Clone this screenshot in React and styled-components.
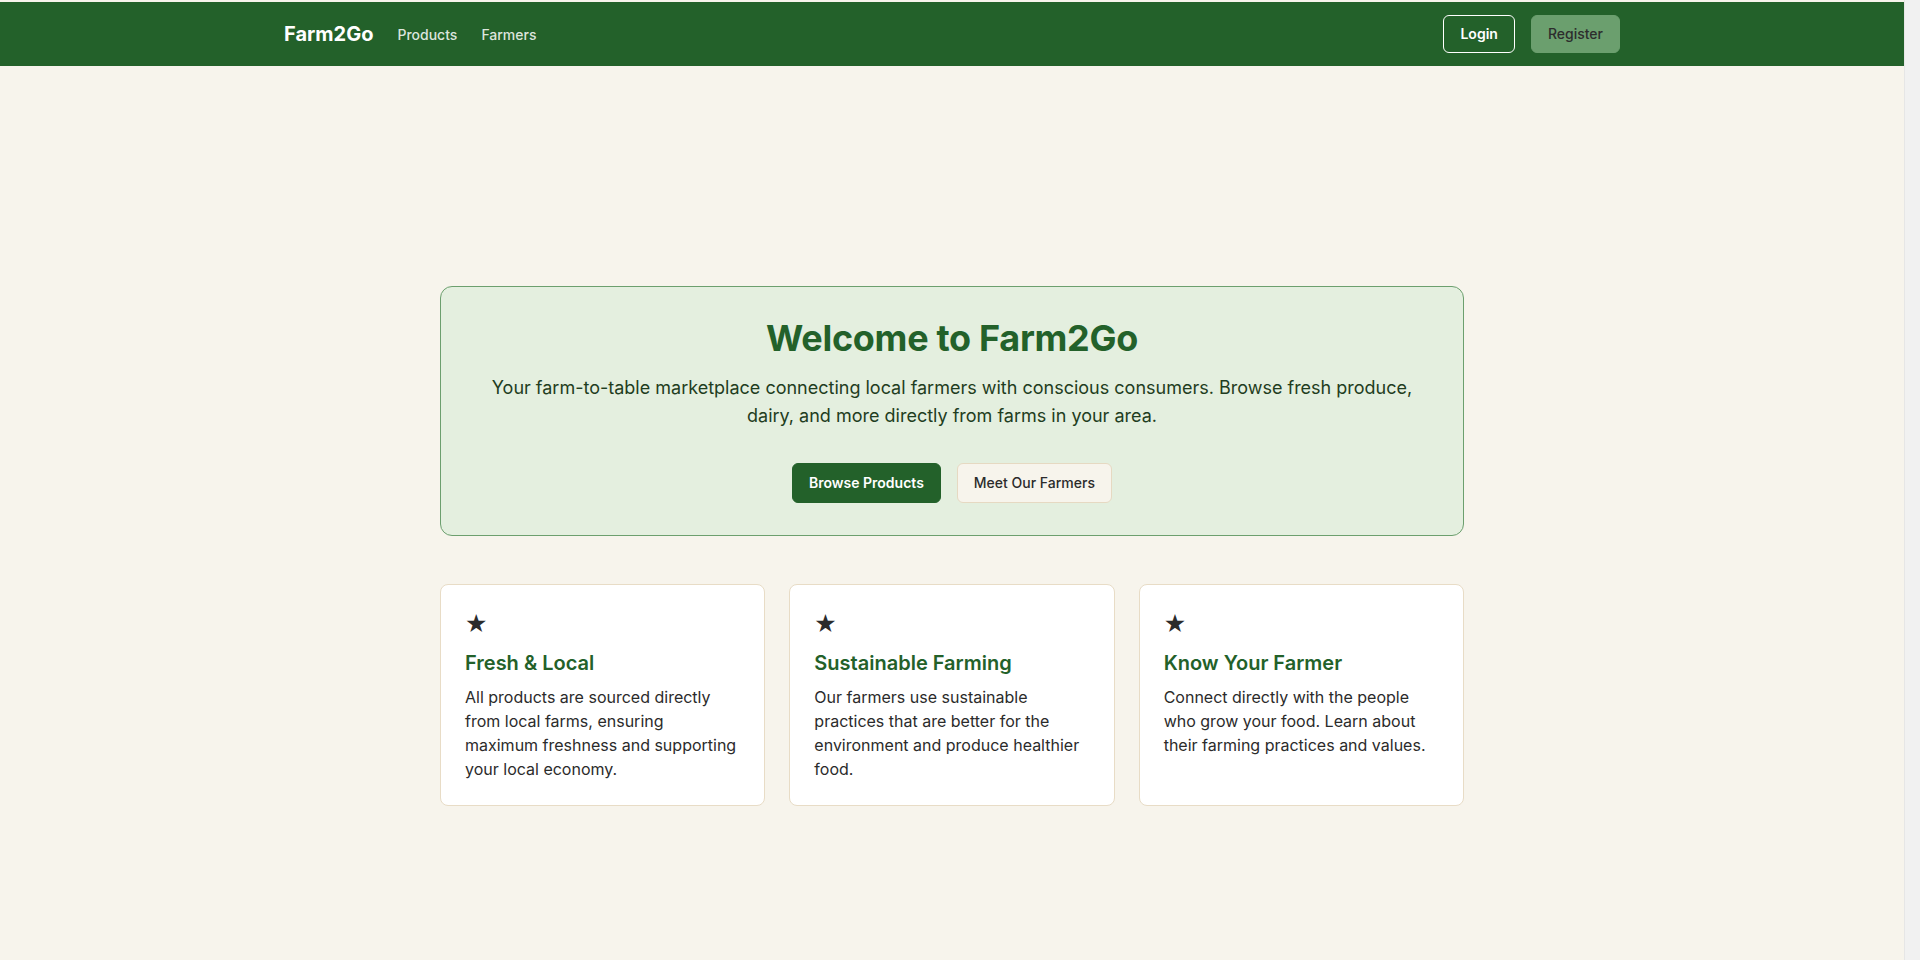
import React from 'react';
import styled, { createGlobalStyle } from 'styled-components';

const GlobalStyle = createGlobalStyle`
  html {
    background: #f1f1f1; /* strip where the scrollbar sits */
  }
  body {
    margin: 0;
    padding: 0;
    font-family: Inter, "Noto Sans", "Liberation Sans", sans-serif;
    color: #2b2b2b;
  }
  * {
    box-sizing: border-box;
  }
`;

const Page = styled.div`
  margin-right: 15px; /* room for the scrollbar gutter */
  padding-top: 2px; /* thin light strip above the bar */
  background: #f7f4ec;
  border-right: 1px solid #e6e6e6;
`;

const NavBar = styled.header`
  background: #23612a;
  height: 64px;
  padding: 0 2rem;
`;

const NavInner = styled.div`
  max-width: 1336px;
  height: 100%;
  margin: 0 auto;
  display: flex;
  align-items: center;
  justify-content: space-between;
`;

const NavLeft = styled.div`
  display: flex;
  align-items: center;
  gap: 24px;
`;

const Brand = styled.a`
  font-size: 20px;
  font-weight: 700;
  color: #ffffff;
  text-decoration: none;
`;

const NavLink = styled.a`
  font-size: 14px;
  font-weight: 500;
  color: rgba(255, 255, 255, 0.85);
  text-decoration: none;
`;

const NavRight = styled.div`
  display: flex;
  align-items: center;
  gap: 16px;
`;

const NavButton = styled.button`
  font-family: inherit;
  font-size: 14px;
  line-height: 20px;
  padding: 8px 16px;
  border-radius: 6px;
  cursor: pointer;
  font-weight: ${(p) => (p.$filled ? 500 : 600)};
  color: ${(p) => (p.$filled ? '#2d2d2d' : '#ffffff')};
  background: ${(p) => (p.$filled ? '#6b9f6e' : 'transparent')};
  border: 1px solid ${(p) => (p.$filled ? '#6b9f6e' : '#ffffff')};
`;

const Main = styled.main`
  min-height: 100vh;
  display: flex;
  align-items: center;
  justify-content: center;
  padding: 0 2rem;
`;

const Content = styled.div`
  width: 100%;
  max-width: 1024px;
`;

const Hero = styled.section`
  background: #e4efdf;
  border: 1px solid #6c9f6e;
  border-radius: 12px;
  padding: 30px 3rem 2rem;
  text-align: center;
`;

const HeroTitle = styled.h1`
  margin: 0 0 14px;
  font-size: 36px;
  line-height: 1.2;
  font-weight: 700;
  color: #23612a;
  letter-spacing: -0.3px;
`;

const HeroText = styled.p`
  margin: 0 0 33px;
  font-size: 18px;
  line-height: 28px;
  color: #1f3d21;
`;

const ButtonRow = styled.div`
  display: flex;
  justify-content: center;
  gap: 16px;
`;

const HeroButton = styled.button`
  font-family: inherit;
  font-size: 14px;
  line-height: 20px;
  font-weight: ${(p) => (p.$primary ? 600 : 500)};
  padding: 9px 16px;
  border-radius: 6px;
  cursor: pointer;
  color: ${(p) => (p.$primary ? '#ffffff' : '#2b2b2b')};
  background: ${(p) => (p.$primary ? '#23612a' : '#f7f4ec')};
  border: 1px solid ${(p) => (p.$primary ? '#23612a' : '#e6d9c2')};
`;

const Features = styled.div`
  margin-top: 48px;
  display: grid;
  grid-template-columns: repeat(3, 1fr);
  gap: 24px;
`;

const Card = styled.div`
  background: #ffffff;
  border: 1px solid #e8dcc6;
  border-radius: 8px;
  padding: 24px;
`;

const CardIcon = styled.div`
  font-family: "DejaVu Sans", sans-serif;
  font-size: 25px;
  line-height: 30px;
  color: #2b2b2b;
  margin-bottom: 10px;
`;

const CardTitle = styled.h3`
  margin: 0 0 8px;
  font-size: 20px;
  line-height: 28px;
  font-weight: 600;
  color: #23612a;
`;

const CardText = styled.p`
  margin: 0;
  font-size: 16px;
  line-height: 24px;
  color: #2b2b2b;
`;

const features = [
  {
    title: 'Fresh & Local',
    text: 'All products are sourced directly from local farms, ensuring maximum freshness and supporting your local economy.',
  },
  {
    title: 'Sustainable Farming',
    text: 'Our farmers use sustainable practices that are better for the environment and produce healthier food.',
  },
  {
    title: 'Know Your Farmer',
    text: 'Connect directly with the people who grow your food. Learn about their farming practices and values.',
  },
];

const App = () => {
  return (
    <>
      <GlobalStyle />
      <Page>
        <NavBar>
          <NavInner>
            <NavLeft>
              <Brand href="#">Farm2Go</Brand>
              <NavLink href="#">Products</NavLink>
              <NavLink href="#">Farmers</NavLink>
            </NavLeft>
            <NavRight>
              <NavButton>Login</NavButton>
              <NavButton $filled>Register</NavButton>
            </NavRight>
          </NavInner>
        </NavBar>

        <Main>
          <Content>
            {/* Hero */}
            <Hero>
              <HeroTitle>Welcome to Farm2Go</HeroTitle>
              <HeroText>
                Your farm-to-table marketplace connecting local farmers with conscious consumers. Browse fresh
                produce, dairy, and more directly from farms in your area.
              </HeroText>
              <ButtonRow>
                <HeroButton $primary>Browse Products</HeroButton>
                <HeroButton>Meet Our Farmers</HeroButton>
              </ButtonRow>
            </Hero>

            {/* Features */}
            <Features>
              {features.map((f) => (
                <Card key={f.title}>
                  <CardIcon>★</CardIcon>
                  <CardTitle>{f.title}</CardTitle>
                  <CardText>{f.text}</CardText>
                </Card>
              ))}
            </Features>
          </Content>
        </Main>
      </Page>
    </>
  );
};

export default App;
